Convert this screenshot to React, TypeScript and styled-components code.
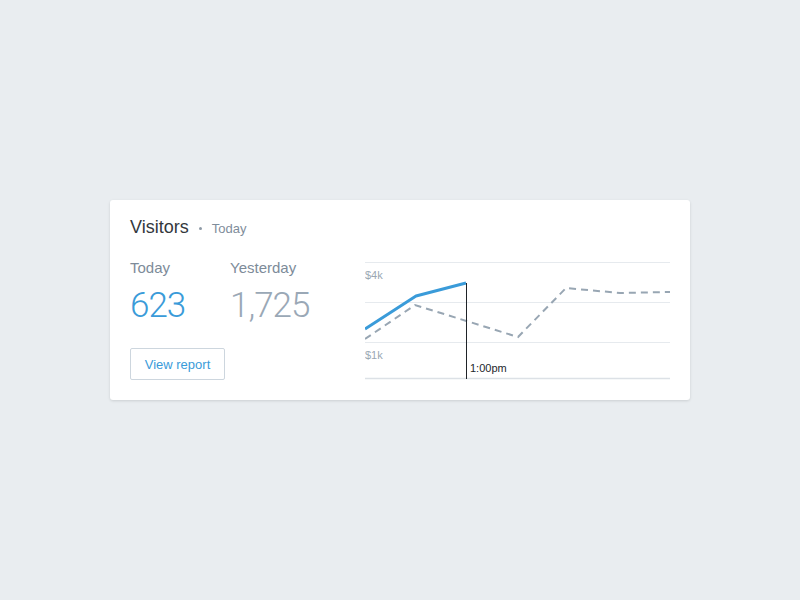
import styled, { createGlobalStyle } from "styled-components";

const GlobalStyle = createGlobalStyle`
  html, body {
    margin: 0;
    padding: 0;
    background: #e9edf0;
    font-family: "Liberation Sans", Arial, sans-serif;
  }
`;

const App = () => {
  return (
    <Page>
      <GlobalStyle />
      <Card>
        <Header>
          <Title>Visitors</Title>
          <Dot />
          <Period>Today</Period>
        </Header>
        <Body>
          <Left>
            <Stats>
              <Stat>
                <StatLabel>Today</StatLabel>
                <StatValue $tone="blue">623</StatValue>
              </Stat>
              <Stat>
                <StatLabel>Yesterday</StatLabel>
                <StatValue $tone="gray">1,725</StatValue>
              </Stat>
            </Stats>
            <ReportButton>View report</ReportButton>
          </Left>
          <Chart />
        </Body>
      </Card>
    </Page>
  );
};

export default App;

const Chart = () => (
  <ChartSvg width={305} height={122} viewBox="0 0 305 122">
    <line x1={0} x2={305} y1={4.5} y2={4.5} stroke="#e6eaee" />
    <line x1={0} x2={305} y1={44.5} y2={44.5} stroke="#e6eaee" />
    <line x1={0} x2={305} y1={84.5} y2={84.5} stroke="#e6eaee" />
    <line x1={0} x2={305} y1={120.5} y2={120.5} stroke="#dce1e6" strokeWidth={1.5} />
    <text x={0} y={21} fontSize={11} fill="#9aa7b3" fontFamily="Liberation Sans, Arial, sans-serif">
      $4k
    </text>
    <text x={0} y={101} fontSize={11} fill="#9aa7b3" fontFamily="Liberation Sans, Arial, sans-serif">
      $1k
    </text>
    <polyline
      points="0,81 50,47 153,79 201,30 255,35 305,34"
      fill="none"
      stroke="#98a6b3"
      strokeWidth={2}
      strokeDasharray="7 5"
    />
    <polyline
      points="0,71 51,38 101,25"
      fill="none"
      stroke="#3a9bd9"
      strokeWidth={3}
      strokeLinejoin="round"
    />
    <line x1={101.5} x2={101.5} y1={25} y2={121} stroke="#1f2328" />
    <text x={105} y={114} fontSize={11} fill="#23272b" fontFamily="Liberation Sans, Arial, sans-serif">
      1:00pm
    </text>
  </ChartSvg>
);

const Page = styled.div`
  width: 800px;
  height: 600px;
  padding-top: 200px;
  box-sizing: border-box;
`;

const Card = styled.div`
  width: 580px;
  margin-left: 110px;
  box-sizing: border-box;
  padding: 16px 20px 20px;
  background: #fff;
  border-radius: 3px;
  box-shadow: 0 1px 3px rgba(0, 0, 0, 0.13);
`;

const Header = styled.div`
  display: flex;
  align-items: center;
  height: 22px;
`;

const Title = styled.span`
  font-size: 18px;
  color: #33383d;
`;

const Dot = styled.span`
  width: 3px;
  height: 3px;
  border-radius: 50%;
  background: #8e9aa6;
  margin: 2px 10px 0 10px;
`;

const Period = styled.span`
  font-size: 13px;
  color: #7f8d9b;
  margin-top: 2px;
`;

const Body = styled.div`
  display: flex;
  align-items: flex-start;
  margin-top: 20px;
`;

const Left = styled.div`
  width: 235px;
  display: flex;
  flex-direction: column;
  align-items: flex-start;
`;

const Stats = styled.div`
  display: flex;
`;

const Stat = styled.div`
  width: 100px;
`;

const StatLabel = styled.div`
  font-size: 15px;
  line-height: 18px;
  color: #7d8b99;
  margin-top: 1px;
`;

const StatValue = styled.div<{ $tone: "blue" | "gray" }>`
  margin-top: 9px;
  font-family: Roboto, "Liberation Sans", sans-serif;
  font-weight: 300;
  font-size: 35px;
  line-height: 40px;
  letter-spacing: -1px;
  color: ${(p) => (p.$tone === "blue" ? "#3a9bd9" : "#9aa8b6")};
`;

const ReportButton = styled.button`
  margin-top: 22px;
  width: 95px;
  height: 32px;
  padding: 0;
  background: #fff;
  border: 1px solid #cdd6de;
  border-radius: 2px;
  font-family: "Liberation Sans", Arial, sans-serif;
  font-size: 13px;
  color: #3a9bd9;
  cursor: pointer;
`;

const ChartSvg = styled.svg`
  display: block;
  flex: none;
`;
